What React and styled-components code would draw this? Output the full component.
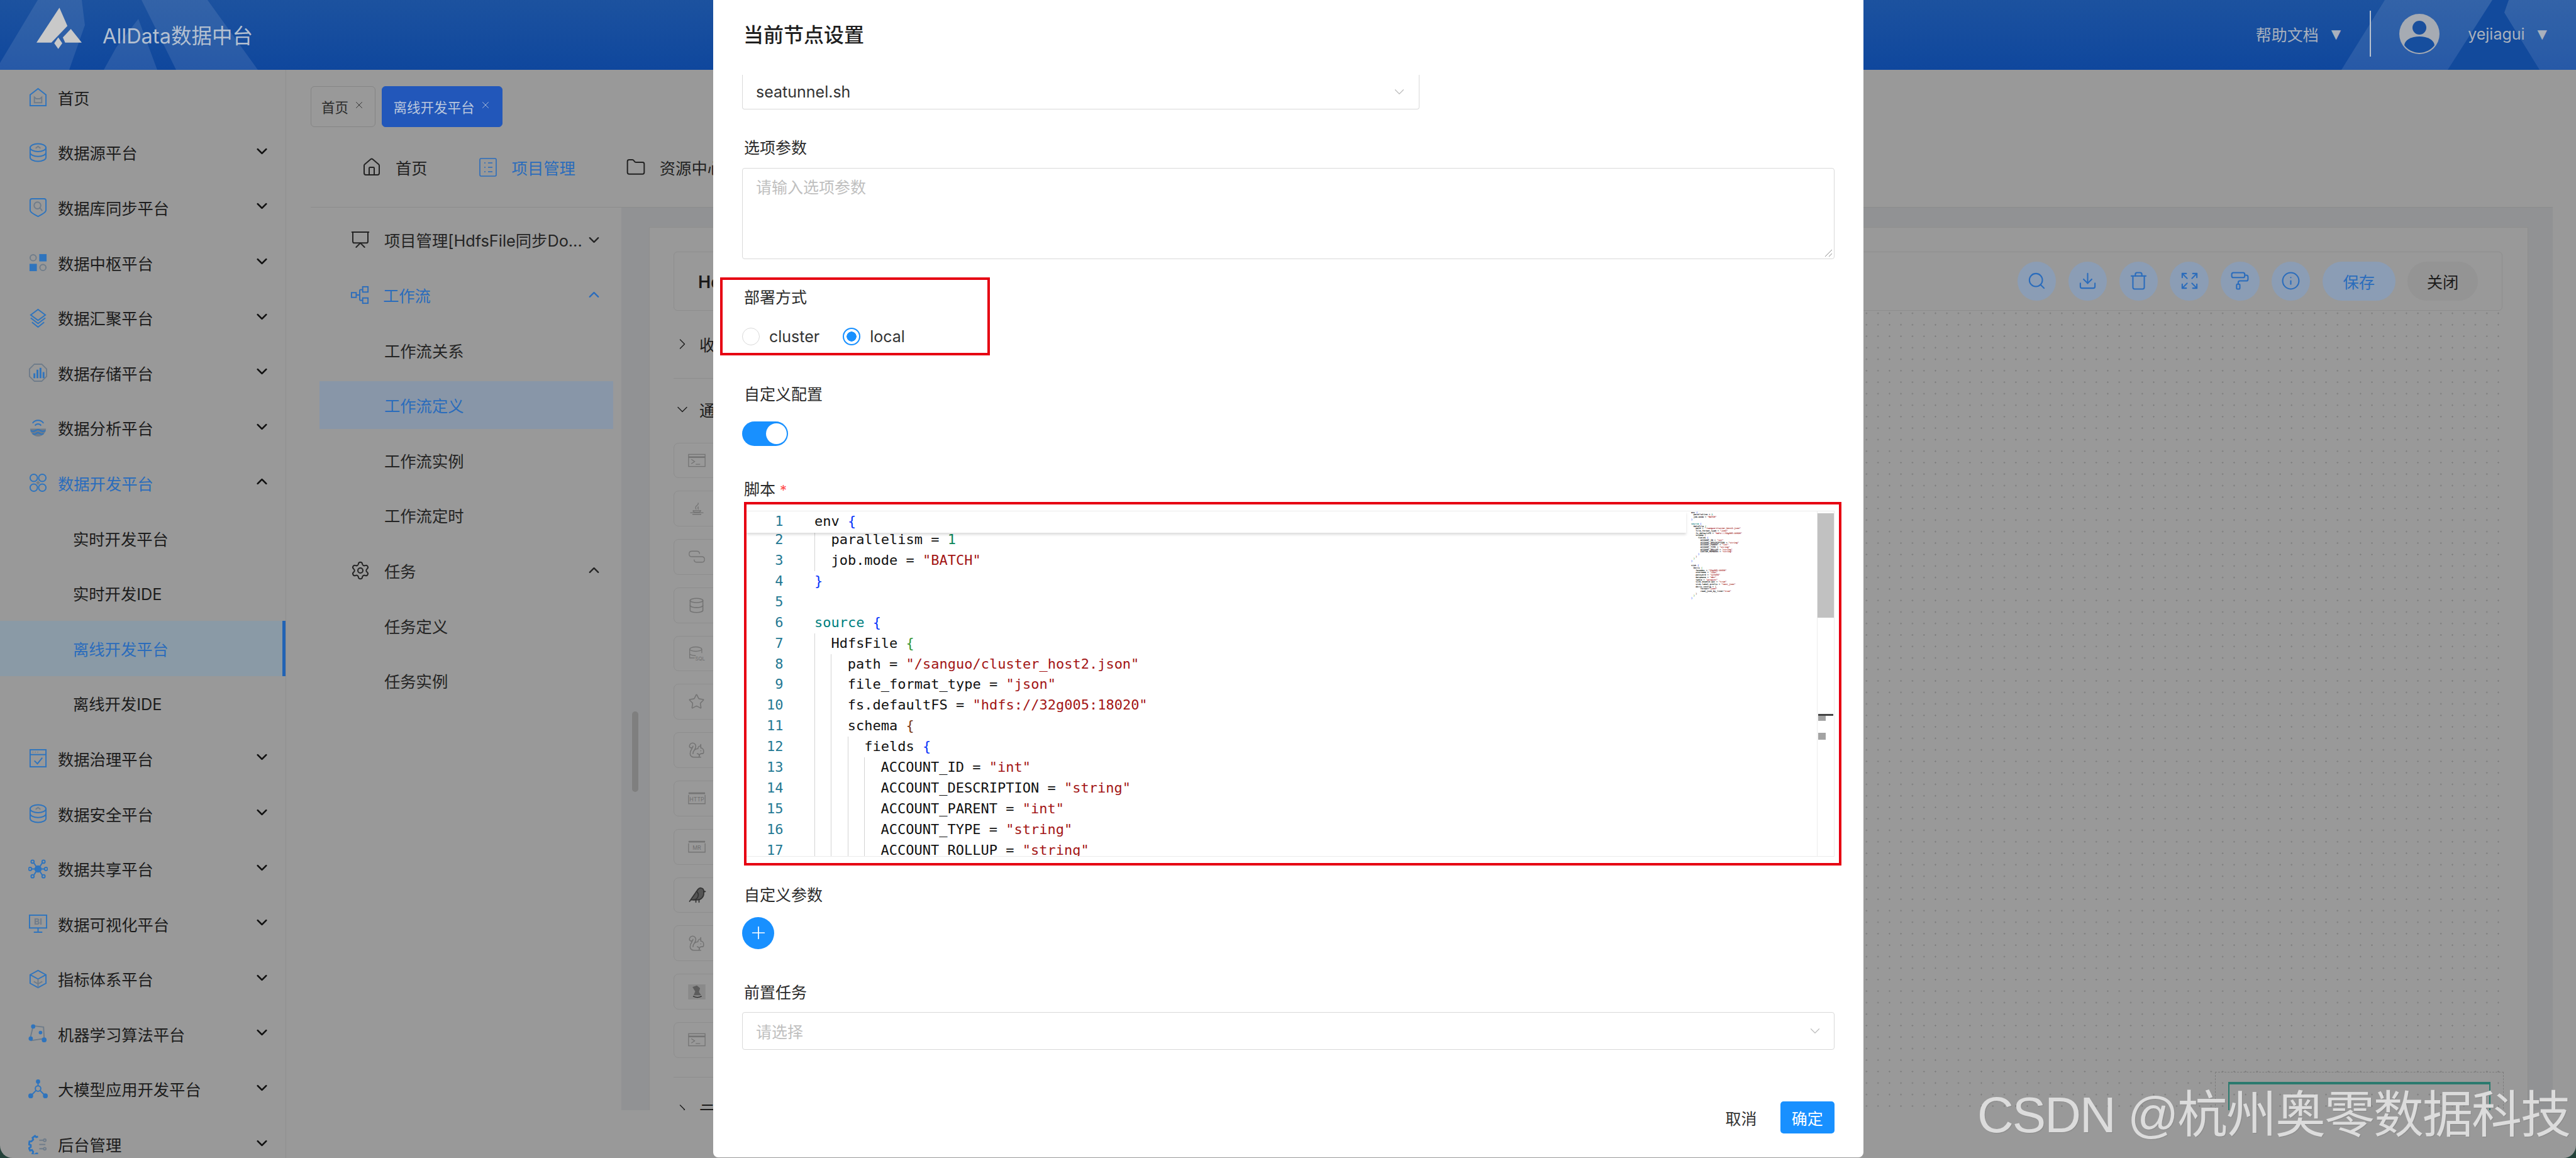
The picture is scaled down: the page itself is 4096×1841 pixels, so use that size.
import React from "react";
import styled, { createGlobalStyle } from "styled-components";
import {
  Bird,
  ChevronDown,
  ChevronRight,
  ChevronUp,
  Database,
  Download,
  Expand,
  Folder,
  House,
  Info,
  PaintRoller,
  Plus,
  Presentation,
  Search,
  Settings,
  Squirrel,
  Star,
  Trash,
  X,
} from "lucide-react";

const BLUE = "#2a6cbc";
const ACCENT = "#6f7c8a";
const UI_FONT = '"Inter", "Noto Sans CJK SC", sans-serif';

const GlobalStyle = createGlobalStyle`
  html, body {
    margin: 0;
    background: #24423a;
    overflow: hidden;
  }
  * {
    box-sizing: border-box;
  }
`;

const SCRIPT = `env {
  parallelism = 1
  job.mode = "BATCH"
}

source {
  HdfsFile {
    path = "/sanguo/cluster_host2.json"
    file_format_type = "json"
    fs.defaultFS = "hdfs://32g005:18020"
    schema {
      fields {
        ACCOUNT_ID = "int"
        ACCOUNT_DESCRIPTION = "string"
        ACCOUNT_PARENT = "int"
        ACCOUNT_TYPE = "string"
        ACCOUNT_ROLLUP = "string"
        CUSTOM_MEMBERS = "string"
      }
    }
  }
}

sink {
  Doris {
    fenodes = "32g005:18030"
    username = "root"
    password = "123456"
    database = "dbt"
    table = "account"
    sink.enable-2pc = "true"
    sink.label-prefix = "test_json"
    doris.config = {
        format="json"
        read_json_by_line="true"
    }
  }
}`.split("\n");

const BRACKET_COLORS = ["#0431fa", "#319331", "#7b3814"];

function tokenColor(token, depth) {
  if (token.startsWith('"')) return "#a31515";
  if (token === "{" || token === "}") return BRACKET_COLORS[depth % 3];
  if (token === "1") return "#098658";
  if (token === "source") return "#008080";
  return "#111";
}

function CodeText({ text }) {
  const depth = Math.floor((text.length - text.trimStart().length) / 2);
  const parts = text.trim().split(/("[^"]*"|[{}]|\b1\b|^source)/).filter(Boolean);
  return parts.map((part, i) => (
    <span key={i} style={{ color: tokenColor(part, depth) }}>
      {part}
    </span>
  ));
}

function CodeLine({ number, text }) {
  const depth = Math.floor((text.length - text.trimStart().length) / 2);
  return (
    <LineRow>
      <LineNumber>{number}</LineNumber>
      <LineCode>
        {Array.from({ length: depth }, (v, i) => (
          <IndentGuide key={i} />
        ))}
        <CodeText text={text} />
      </LineCode>
    </LineRow>
  );
}

const sideGlyphs = {
  home: (
    <>
      <path d="M16 2 29 12V30H3V12Z" />
      <path d="M10 16l3 2.5h6l3-2.5V25H10Z" stroke={ACCENT} />
    </>
  ),
  disks: (
    <>
      <ellipse cx="16" cy="8" rx="13" ry="6.5" />
      <path d="M3 8v8c0 3.6 5.8 6.5 13 6.5s13-2.9 13-6.5V8" />
      <path d="M3 16v8c0 3.6 5.8 6.5 13 6.5s13-2.9 13-6.5v-8" />
      <path d="M12 9l4-3 4 3" stroke={ACCENT} />
    </>
  ),
  shield: (
    <>
      <path d="M6 2H26Q29 2 29 5V21Q29 25 16 31 3 25 3 21V5Q3 2 6 2Z" />
      <circle cx="15" cy="13" r="5.5" stroke={ACCENT} />
      <path d="M19 17l4 5" stroke={ACCENT} />
    </>
  ),
  hub: (
    <>
      <circle cx="8" cy="8" r="5" stroke={ACCENT} />
      <rect x="18" y="2" width="12" height="12" fill="#2f74bd" stroke="none" />
      <rect x="2" y="18" width="12" height="12" fill="#2f74bd" stroke="none" />
      <circle cx="24" cy="24" r="5" stroke={ACCENT} />
    </>
  ),
  layers: (
    <>
      <path d="M16 2 28 11 16 20 4 11Z" />
      <path d="M4 16l12 9 12-9" />
      <path d="M6 23l10 8 10-8" />
    </>
  ),
  storage: (
    <>
      <path d="M10 2H22L30 10V22L22 30H10L2 22V10Z" stroke={ACCENT} />
      <path d="M10 25V17M15 25V11M20 25V8M25 25V15" strokeWidth="3" />
    </>
  ),
  waves: (
    <>
      <path d="M7 8a11 11 0 0 1 18 0" />
      <path d="M11 12a6 6 0 0 1 10 0" />
      <path d="M3 17H29A13 13 0 0 1 3 17Z" fill={ACCENT} stroke="none" />
      <path d="M4 20q4 3 8 0t8 0 8 0M7 25q3 2.5 6 0t6 0 6 0" />
    </>
  ),
  clover: (
    <>
      <circle cx="9" cy="8" r="6" />
      <circle cx="23" cy="8" r="6" />
      <circle cx="9" cy="24" r="6" />
      <circle cx="23" cy="24" r="6" />
      <path d="M16 13v6M13 16h6" stroke={ACCENT} />
    </>
  ),
  govern: (
    <>
      <rect x="3" y="2" width="26" height="28" />
      <path d="M3 10H29" />
      <path d="M7 6h1M11 6h1M15 6h1" stroke={ACCENT} />
      <path d="M10 20l5 5 8-10" />
    </>
  ),
  share: (
    <>
      <circle cx="16" cy="16" r="5" fill="#2f74bd" />
      <circle cx="7" cy="4" r="2.5" />
      <circle cx="25" cy="4" r="2.5" />
      <circle cx="3" cy="16" r="2.5" />
      <circle cx="29" cy="16" r="2.5" />
      <circle cx="7" cy="28" r="2.5" />
      <circle cx="25" cy="28" r="2.5" />
      <path d="M9 6l4 6M23 6l-4 6M6 16h5M21 16h5M9 26l4-6M23 26l-4-6" />
    </>
  ),
  screen: (
    <>
      <rect x="2" y="2" width="28" height="21" />
      <path d="M16 23v7M9 30H23" />
      <text x="16" y="18" fontSize="14" fontWeight="700" textAnchor="middle" fill={ACCENT} stroke="none">
        BI
      </text>
    </>
  ),
  cube: (
    <>
      <path d="M16 2 29 9V23L16 30 3 23V9Z" />
      <path d="M3 9l13 7 13-7" />
      <path d="M16 16V30M9 20l7 4 7-4" stroke={ACCENT} />
    </>
  ),
  model: (
    <>
      <path d="M8 3 25 5 26 24 5 27 3 24Z" stroke={ACCENT} />
      <circle cx="8" cy="4" r="2.5" fill="#2f74bd" />
      <circle cx="26" cy="26" r="3" fill="#2f74bd" />
      <circle cx="4" cy="24" r="2.5" fill="#2f74bd" />
      <circle cx="20" cy="14" r="2" fill="#2f74bd" />
    </>
  ),
  graph: (
    <>
      <circle cx="16" cy="15" r="4.5" />
      <circle cx="16" cy="3.5" r="2.5" fill="#2f74bd" />
      <circle cx="4" cy="27" r="3" fill="#2f74bd" />
      <circle cx="28" cy="27" r="3" fill="#2f74bd" />
      <path d="M16 6v5M6 25l7-7M26 25l-7-7" />
    </>
  ),
  gear: (
    <>
      <path
        d="M16 3l-3 1-2-2-4 3 1 3-3 3-3 0-1 5 3 1v3l-3 2 2 4 3-1 2 3-1 3 4 2 2-2h3"
        strokeWidth="3"
      />
      <path d="M18 9h7M18 16h10M18 23h7" stroke={ACCENT} />
      <circle cx="27" cy="9" r="2" stroke={ACCENT} />
      <circle cx="27" cy="23" r="2" stroke={ACCENT} />
    </>
  ),
};

const SIDE_ITEMS = [
  { label: "首页", glyph: "home" },
  { label: "数据源平台", glyph: "disks", arrow: "down" },
  { label: "数据库同步平台", glyph: "shield", arrow: "down" },
  { label: "数据中枢平台", glyph: "hub", arrow: "down" },
  { label: "数据汇聚平台", glyph: "layers", arrow: "down" },
  { label: "数据存储平台", glyph: "storage", arrow: "down" },
  { label: "数据分析平台", glyph: "waves", arrow: "down" },
  { label: "数据开发平台", glyph: "clover", arrow: "up", open: true },
  { label: "实时开发平台", sub: true },
  { label: "实时开发IDE", sub: true },
  { label: "离线开发平台", sub: true, selected: true },
  { label: "离线开发IDE", sub: true },
  { label: "数据治理平台", glyph: "govern", arrow: "down" },
  { label: "数据安全平台", glyph: "disks", arrow: "down" },
  { label: "数据共享平台", glyph: "share", arrow: "down" },
  { label: "数据可视化平台", glyph: "screen", arrow: "down" },
  { label: "指标体系平台", glyph: "cube", arrow: "down" },
  { label: "机器学习算法平台", glyph: "model", arrow: "down" },
  { label: "大模型应用开发平台", glyph: "graph", arrow: "down" },
  { label: "后台管理", glyph: "gear", arrow: "down" },
];

const ShellGlyph = () => (
  <ListSvg viewBox="0 0 32 24">
    <rect x="1" y="1" width="30" height="22" />
    <path d="M1 6H31" strokeWidth="3" />
    <path d="M6 10l6 4-6 4M14 19h8" />
  </ListSvg>
);

const LabelGlyph = ({ text }) => (
  <ListSvg viewBox="0 0 32 24">
    <path d="M1 6V22H31V6" />
    <path d="M1 3H31" strokeWidth="3" />
    <text x="16" y="18" fontSize="10" textAnchor="middle" fill="#6f6f6f" stroke="none">
      {text}
    </text>
  </ListSvg>
);

const SqlGlyph = () => (
  <ListSvg viewBox="0 0 32 26">
    <ellipse cx="14" cy="5" rx="11" ry="4" />
    <path d="M3 5V21H12M25 5V12M3 13c0 2 5 4 11 4" />
    <text x="22" y="25" fontSize="9" textAnchor="middle" fill="#6f6f6f" stroke="none">
      SQL
    </text>
  </ListSvg>
);

const HiveGlyph = () => (
  <ListSvg viewBox="0 0 32 28">
    <rect x="0" y="0" width="32" height="28" fill="#8a8a8a" stroke="none" />
    <path d="M8 5l8-3 6 5-2 7 4 6H10l3-7Z" fill="#5c5c5c" stroke="none" />
    <path d="M9 22q8 4 16 0" stroke="#2a2a2a" />
  </ListSvg>
);

const JavaGlyph = () => (
  <ListSvg viewBox="0 0 32 24">
    <path d="M4 19h24M8 22h16M9 15h14q0 3-7 3t-7-3M15 13q-3-4 1-7t2-5M19 13q-2-3 0-5" />
  </ListSvg>
);

const PythonGlyph = () => (
  <ListSvg viewBox="0 0 32 24">
    <path d="M16 12H7q-5 0-5-5t5-5h9q5 0 5 5M16 12h9q5 0 5 5t-5 5h-9q-5 0-5-5" />
  </ListSvg>
);

const listIcons = () => [
  <ShellGlyph key="shell" />,
  <JavaGlyph key="java" />,
  <PythonGlyph key="python" />,
  <Database key="db" size={27} strokeWidth={1.4} color="#747474" />,
  <SqlGlyph key="sql" />,
  <Star key="star" size={27} strokeWidth={1.4} color="#747474" />,
  <Squirrel key="squirrel" size={27} strokeWidth={1.4} color="#747474" />,
  <LabelGlyph key="http" text="HTTP" />,
  <LabelGlyph key="mr" text="MR" />,
  <Bird key="bird" size={30} strokeWidth={1.4} color="#333" fill="#555" />,
  <Squirrel key="squirrel2" size={27} strokeWidth={1.4} color="#747474" />,
  <HiveGlyph key="hive" />,
  <ShellGlyph key="shell2" />,
];

const TOOL_ICONS = [Search, Download, Trash, Expand, PaintRoller, Info];

const MENU_ROWS = [
  { label: "工作流关系" },
  { label: "工作流定义", selected: true },
  { label: "工作流实例" },
  { label: "工作流定时" },
];

export default function App() {
  return (
    <Page>
      <GlobalStyle />
      <Header>
        <HeaderDecor viewBox="0 0 4096 111" preserveAspectRatio="none">
          <path d="M0 100 60 0H130L135 40 110 111H0ZM225 0H330L410 111H280ZM165 111 185 75 220 30 250 111Z" fill="#ffffff" opacity="0.1" />
          <path d="M3723 111 3792 0H4096V111Z" fill="#ffffff" opacity="0.1" />
          <path d="M3892 111 3963 0H3989L3982 20 4038 111Z" fill="#124a9c" />
        </HeaderDecor>
        <Logo viewBox="0 0 79 72">
          <path d="M40 0 54 32 26 61H0Z" fill="#c9c9c9" />
          <path d="M60 37 79 61H50L46 52Z" fill="#c9c9c9" />
          <path d="M38 52 45 62 38 72 31 62Z" fill="#c9c9c9" />
        </Logo>
        <BrandName>AllData数据中台</BrandName>
        <HeaderRight>
          <HeaderText>帮助文档</HeaderText>
          <Caret>▼</Caret>
          <HeaderDivider />
          <Avatar viewBox="0 0 64 64">
            <circle cx="32" cy="32" r="32" fill="#a6abb3" />
            <circle cx="32" cy="22" r="11" fill="#1a4f9c" />
            <path d="M8 50a24 14 0 0 1 48 0 30 30 0 0 1-48 0Z" fill="#164e9e" />
          </Avatar>
          <HeaderText $name>yejiagui</HeaderText>
          <Caret>▼</Caret>
        </HeaderRight>
      </Header>

      <Body>
        <Sidebar>
          {SIDE_ITEMS.map((item) => (
            <SideRow key={item.label} $sub={item.sub} $selected={item.selected} $open={item.open}>
              {item.glyph && <SideIcon viewBox="0 0 32 32">{sideGlyphs[item.glyph]}</SideIcon>}
              <SideLabel>{item.label}</SideLabel>
              {item.arrow === "down" && <ChevronDown size={27} strokeWidth={2.4} />}
              {item.arrow === "up" && <ChevronUp size={27} strokeWidth={2.4} />}
            </SideRow>
          ))}
        </Sidebar>

        <Main>
          <TabBar>
            <Tab $width={103}>
              首页
              <X size={18} strokeWidth={1.2} />
            </Tab>
            <Tab $width={192} $active>
              离线开发平台
              <X size={18} strokeWidth={1.2} />
            </Tab>
          </TabBar>
          <TopNav>
            <NavItem>
              <House size={32} strokeWidth={1.5} />
              首页
            </NavItem>
            <NavItem $active>
              <ListBoard viewBox="0 0 32 32">
                <rect x="3" y="2" width="26" height="28" rx="2" />
                <path d="M10 9h2M10 16h2M10 23h2M16 9h7M16 16h7M16 23h7" />
              </ListBoard>
              项目管理
            </NavItem>
            <NavItem>
              <Folder size={32} strokeWidth={1.5} />
              资源中心
            </NavItem>
          </TopNav>

          <Workspace>
            <MenuPanel>
              <MenuRow>
                <Presentation size={32} strokeWidth={1.5} />
                <MenuLabel>项目管理[HdfsFile同步Do...</MenuLabel>
                <ChevronDown size={27} strokeWidth={2} />
              </MenuRow>
              <MenuRow $active>
                <FlowIcon viewBox="0 0 32 32">
                  <rect x="2" y="12" width="8" height="8" />
                  <rect x="21" y="2" width="9" height="9" />
                  <rect x="21" y="21" width="9" height="9" />
                  <path d="M10 16h6M16 7V25M16 7h5M16 25h5" />
                </FlowIcon>
                <MenuLabel>工作流</MenuLabel>
                <ChevronUp size={27} strokeWidth={2} />
              </MenuRow>
              {MENU_ROWS.map((row) => (
                <MenuRow key={row.label} $sub $selected={row.selected}>
                  <MenuLabel>{row.label}</MenuLabel>
                </MenuRow>
              ))}
              <MenuRow>
                <Settings size={32} strokeWidth={1.5} />
                <MenuLabel>任务</MenuLabel>
                <ChevronUp size={27} strokeWidth={2} />
              </MenuRow>
              <MenuRow $sub>
                <MenuLabel>任务定义</MenuLabel>
              </MenuRow>
              <MenuRow $sub>
                <MenuLabel>任务实例</MenuLabel>
              </MenuRow>
            </MenuPanel>

            <Gutter>
              <GutterThumb />
            </Gutter>

            <Card>
              <Toolbar>
                <FlowName>HdfsFile同步Doris</FlowName>
                <ToolButtons>
                  {TOOL_ICONS.map((Icon, i) => (
                    <RoundButton key={i}>
                      <Icon size={31} strokeWidth={1.6} />
                    </RoundButton>
                  ))}
                  <PillButton>保存</PillButton>
                  <PillButton $neutral>关闭</PillButton>
                </ToolButtons>
              </Toolbar>
              <CanvasRow>
                <ComponentPanel>
                  <CollapseHead $line>
                    <ChevronRight size={28} strokeWidth={1.2} />
                    收藏组件
                  </CollapseHead>
                  <CollapseHead $open>
                    <ChevronDown size={28} strokeWidth={1.2} />
                    通用组件
                  </CollapseHead>
                  <ComponentList>
                    {listIcons().map((icon) => (
                      <ComponentCard key={icon.key}>{icon}</ComponentCard>
                    ))}
                  </ComponentList>
                  <CollapseHead $last>
                    <ChevronRight size={28} strokeWidth={1.2} />
                    云
                  </CollapseHead>
                </ComponentPanel>
                <Canvas>
                  <DashedFrame />
                  <FlowNode />
                </Canvas>
              </CanvasRow>
            </Card>
          </Workspace>
        </Main>
      </Body>

      <Watermark>CSDN @杭州奥零数据科技</Watermark>

      <Modal>
        <ModalTitle>当前节点设置</ModalTitle>
        <ClippedSelect>
          seatunnel.sh
          <ChevronDown size={26} strokeWidth={1.1} color="#bdbdbd" />
        </ClippedSelect>

        <FieldLabel $top={46}>选项参数</FieldLabel>
        <TextArea>
          请输入选项参数
          <ResizeGrip viewBox="0 0 14 14">
            <path d="M2 13 13 2M8 13l5-5" />
          </ResizeGrip>
        </TextArea>

        <RedBox>
          <FieldLabel>部署方式</FieldLabel>
          <RadioGroup>
            <RadioItem>
              <RadioDot />
              cluster
            </RadioItem>
            <RadioItem>
              <RadioDot $checked />
              local
            </RadioItem>
          </RadioGroup>
        </RedBox>

        <FieldLabel $top={47}>自定义配置</FieldLabel>
        <Switch />

        <FieldLabel $top={54}>
          脚本 <Required>*</Required>
        </FieldLabel>
        <CodeBox>
          <Editor>
            <StickyLine>
              <CodeLine number={1} text={SCRIPT[0]} />
            </StickyLine>
            <CodeLines>
              {SCRIPT.slice(1, 17).map((text, i) => (
                <CodeLine key={i} number={i + 2} text={text} />
              ))}
            </CodeLines>
            <Minimap aria-hidden="true">
              {SCRIPT.map((text, i) => (
                <MiniLine key={i} style={{ paddingLeft: `${(text.length - text.trimStart().length) * 1.83}px` }}>
                  <CodeText text={text} />
                </MiniLine>
              ))}
            </Minimap>
            <OverviewRuler>
              <RulerThumb />
              <RulerMark $dark />
              <RulerBlock />
              <RulerBlock $low />
            </OverviewRuler>
          </Editor>
        </CodeBox>

        <FieldLabel $top={32}>自定义参数</FieldLabel>
        <AddButton>
          <Plus size={32} strokeWidth={1.3} />
        </AddButton>

        <FieldLabel $top={54}>前置任务</FieldLabel>
        <SelectBox>
          请选择
          <ChevronDown size={26} strokeWidth={1.1} color="#bdbdbd" />
        </SelectBox>

        <ModalFooter>
          <CancelText>取消</CancelText>
          <ConfirmButton>确定</ConfirmButton>
        </ModalFooter>
      </Modal>
    </Page>
  );
}

const Page = styled.div`
  position: relative;
  width: 4096px;
  height: 1841px;
  overflow: hidden;
  display: flex;
  flex-direction: column;
  background: #999;
  border-radius: 0 0 20px 20px;
  font-family: ${UI_FONT};
  color: #1c1c1c;
`;

const Header = styled.header`
  position: relative;
  flex: none;
  height: 111px;
  display: flex;
  align-items: center;
  padding: 0 46px 0 58px;
  overflow: hidden;
  background: linear-gradient(180deg, #1c529f 0%, #0f479d 100%);
`;

const HeaderDecor = styled.svg`
  position: absolute;
  inset: 0;
  width: 100%;
  height: 100%;
`;

const Logo = styled.svg`
  position: relative;
  flex: none;
  width: 72px;
  height: 66px;
  margin-top: -22px;
`;

const BrandName = styled.div`
  position: relative;
  margin-left: 33px;
  margin-top: -2px;
  font-size: 32.5px;
  color: #b4c0d0;
`;

const HeaderRight = styled.div`
  position: relative;
  margin-left: auto;
  display: flex;
  align-items: center;
  margin-top: -4px;
`;

const HeaderText = styled.span`
  font-size: 25px;
  color: #a9b1bd;
  margin-left: ${(props) => (props.$name ? "45px" : "0")};
`;

const Caret = styled.span`
  font-family: "DejaVu Sans", sans-serif;
  font-size: 20px;
  color: #a9b1bd;
  margin-left: 20px;
`;

const HeaderDivider = styled.div`
  width: 2px;
  height: 73px;
  margin: 0 45px 0 46px;
  background: #b9c2ce;
`;

const Avatar = styled.svg`
  flex: none;
  width: 64px;
  height: 64px;
`;

const Body = styled.div`
  flex: 1;
  display: flex;
  min-height: 0;
`;

const Sidebar = styled.nav`
  flex: none;
  width: 455px;
  overflow: hidden;
  border-right: 1px solid #8f8f8f;
`;

const SideRow = styled.div`
  height: 87.6px;
  display: flex;
  align-items: center;
  gap: 16px;
  padding: 0 24px 0 ${(props) => (props.$sub ? "116px" : "45px")};
  color: ${(props) => (props.$selected || props.$open ? BLUE : "#1c1c1c")};
  background: ${(props) => (props.$selected ? "#8a9aa6" : "transparent")};
  border-right: ${(props) => (props.$selected ? "5px solid #2263b4" : "0")};

  > svg:last-child:not(:first-child) {
    color: #111;
    margin-top: -4px;
  }
`;

const SideIcon = styled.svg`
  flex: none;
  width: 31px;
  height: 31px;
  fill: none;
  stroke: #2f74bd;
  stroke-width: 2;
`;

const SideLabel = styled.span`
  flex: 1;
  font-size: 25.3px;
  white-space: nowrap;
`;

const Main = styled.main`
  flex: 1;
  min-width: 0;
  margin: 0 37px 76px 39px;
  display: flex;
  flex-direction: column;
`;

const TabBar = styled.div`
  flex: none;
  display: flex;
  gap: 10px;
  padding-top: 26px;
`;

const Tab = styled.div`
  width: ${(props) => props.$width}px;
  height: 65px;
  display: flex;
  align-items: center;
  justify-content: center;
  gap: 8px;
  border: 1px solid ${(props) => (props.$active ? "#2257ba" : "#858585")};
  border-radius: 6px;
  font-size: 21.5px;
  color: ${(props) => (props.$active ? "#b9c6dd" : "#2a2a2a")};
  background: ${(props) => (props.$active ? "#2257ba" : "#999")};

  svg {
    flex: none;
    margin-top: -6px;
  }
`;

const TopNav = styled.div`
  flex: none;
  height: 128px;
  display: flex;
  align-items: center;
  gap: 80px;
  padding-left: 81px;
  border-bottom: 1px solid #8c8c8c;
`;

const NavItem = styled.div`
  display: flex;
  align-items: center;
  gap: 22px;
  font-size: 25.3px;
  color: ${(props) => (props.$active ? BLUE : "#222")};

  svg {
    flex: none;
  }
`;

const ListBoard = styled.svg`
  width: 32px;
  height: 32px;
  fill: none;
  stroke: ${BLUE};
  stroke-width: 1.6;
`;

const Workspace = styled.div`
  flex: 1;
  min-height: 0;
  display: flex;
  background: #919294;
`;

const MenuPanel = styled.div`
  flex: none;
  width: 494px;
  padding-top: 7.6px;
  background: #999;
`;

const MenuRow = styled.div`
  position: relative;
  height: 87.6px;
  display: flex;
  align-items: center;
  gap: 22px;
  padding: ${(props) => (props.$sub ? "0 30px 0 117px" : "0 30px 0 63px")};
  color: ${(props) => (props.$active || props.$selected ? BLUE : "#242424")};
  background: ${(props) =>
    props.$selected ? "linear-gradient(#999 0 6px, #8896a8 6px 81.6px, #999 81.6px)" : "transparent"};
  background-size: 467px 100%;
  background-position: 14px 0;
  background-repeat: no-repeat;

  svg {
    flex: none;
  }
`;

const FlowIcon = styled.svg`
  flex: none;
  width: 30px;
  height: 30px;
  fill: none;
  stroke: ${BLUE};
  stroke-width: 2;
`;

const MenuLabel = styled.span`
  flex: 1;
  min-width: 0;
  margin-right: -16px;
  font-size: 25.3px;
  white-space: nowrap;
`;

const Gutter = styled.div`
  position: relative;
  flex: none;
  width: 44px;
`;

const GutterThumb = styled.div`
  position: absolute;
  top: 801px;
  left: 17px;
  width: 10px;
  height: 128px;
  border-radius: 5px;
  background: #7f7f7f;
`;

const Card = styled.section`
  flex: 1;
  min-width: 0;
  margin: 31px 39px 0 0;
  padding: 38px 40px 0 38px;
  display: flex;
  flex-direction: column;
  overflow: hidden;
  background: #999;
  border: 1px solid #8e8e8e;
  border-bottom: 0;
`;

const Toolbar = styled.div`
  flex: none;
  height: 93.5px;
  display: flex;
  align-items: center;
  justify-content: space-between;
  padding: 0 38px;
  border: 1px solid #8e8e8e;
  border-radius: 6px;
`;

const FlowName = styled.div`
  font-size: 27px;
  font-weight: 600;
  color: #1a1a1a;
`;

const ToolButtons = styled.div`
  display: flex;
  align-items: center;
  gap: 19.3px;
`;

const RoundButton = styled.div`
  width: 61.5px;
  height: 62px;
  display: flex;
  align-items: center;
  justify-content: center;
  border-radius: 50%;
  color: ${BLUE};
  background: #8b9db5;
`;

const PillButton = styled.div`
  width: ${(props) => (props.$neutral ? "112px" : "116px")};
  height: 62px;
  display: flex;
  align-items: center;
  justify-content: center;
  border-radius: 31px;
  font-size: 25.3px;
  color: ${(props) => (props.$neutral ? "#1c1c1c" : BLUE)};
  background: ${(props) => (props.$neutral ? "#949494" : "#8b9db5")};
`;

const CanvasRow = styled.div`
  flex: 1;
  min-height: 0;
  display: flex;
`;

const ComponentPanel = styled.aside`
  flex: none;
  width: 320px;
`;

const CollapseHead = styled.div`
  display: flex;
  align-items: center;
  gap: 13px;
  height: ${(props) => (props.$open ? "98px" : props.$last ? "auto" : "108px")};
  margin-top: ${(props) => (props.$last ? "33px" : "0")};
  font-size: 25.3px;
  border-bottom: ${(props) => (props.$line ? "1px solid #8e8e8e" : "0")};
`;

const ComponentList = styled.div`
  display: flex;
  flex-direction: column;
  gap: 20px;
  padding: 4px 0 30px;
  border-bottom: 1px solid #8e8e8e;
`;

const ComponentCard = styled.div`
  height: 56.8px;
  display: flex;
  align-items: center;
  padding-left: 22px;
  border: 1px solid #8e8e8e;
  border-radius: 8px;
`;

const ListSvg = styled.svg`
  width: 28px;
  height: 24px;
  fill: none;
  stroke: #747474;
  stroke-width: 1.5;
`;

const Canvas = styled.div`
  position: relative;
  flex: 1;
  min-width: 0;
  background-image: radial-gradient(circle, #7d7d7d 1px, transparent 1.3px);
  background-size: 18.28px 18.28px;
  background-position: -3.1px -5.1px;
`;

const DashedFrame = styled.div`
  position: absolute;
  left: 2131px;
  top: 1210px;
  width: 459px;
  height: 100px;
  border: 1px dashed #7c7c7c;
`;

const FlowNode = styled.div`
  position: absolute;
  left: 2152px;
  top: 1226px;
  width: 417px;
  height: 100px;
  border: 2px solid #2a7a6e;
  border-top-width: 4px;
`;

const Watermark = styled.div`
  position: absolute;
  left: 3144px;
  top: 1733px;
  font-family: "Liberation Sans", "Noto Sans CJK SC", sans-serif;
  font-size: 80px;
  line-height: 80px;
  letter-spacing: -2px;
  white-space: nowrap;
  color: #dcdcdc;
  text-shadow: 1px 1px 1px #8a8a8a;
`;

const Modal = styled.div`
  position: absolute;
  top: 0;
  left: 1134px;
  width: 1829px;
  height: 1840px;
  display: flex;
  flex-direction: column;
  align-items: flex-start;
  padding: 0 46px;
  background: #fff;
  border-radius: 0 0 8px 8px;
  font-size: 25px;
  color: #262626;
`;

const ModalTitle = styled.div`
  flex: none;
  height: 119px;
  padding: 34px 0 0 2px;
  font-size: 32px;
  line-height: 44px;
  font-weight: 500;
  color: #1f1f1f;
`;

const ClippedSelect = styled.div`
  flex: none;
  width: 1077px;
  height: 55px;
  display: flex;
  align-items: center;
  justify-content: space-between;
  padding: 0 18px 0 21px;
  border: 1px solid #d9d9d9;
  border-top: 0;
  border-radius: 0 0 4px 4px;
  color: #333;
`;

const FieldLabel = styled.div`
  flex: none;
  height: 30px;
  line-height: 30px;
  padding-left: 3px;
  margin-top: ${(props) => props.$top || 0}px;
  color: #2a2a2a;
`;

const Required = styled.span`
  color: #ff4d4f;
  font-size: 22px;
`;

const TextArea = styled.div`
  position: relative;
  flex: none;
  width: 100%;
  height: 145px;
  margin-top: 17px;
  padding: 15px 21px;
  line-height: 30px;
  border: 1px solid #d9d9d9;
  border-radius: 4px;
  color: #bfbfbf;
`;

const ResizeGrip = styled.svg`
  position: absolute;
  right: 2px;
  bottom: 2px;
  width: 14px;
  height: 14px;
  fill: none;
  stroke: #8c8c8c;
  stroke-width: 1;
`;

const RedBox = styled.div`
  flex: none;
  width: 428.5px;
  height: 124px;
  margin: 28.6px 0 0 -35px;
  padding: 13px 0 0 31px;
  border: 4.5px solid #e60012;
`;

const RadioGroup = styled.div`
  display: flex;
  gap: 37px;
  margin-top: 33px;
`;

const RadioItem = styled.div`
  display: flex;
  align-items: center;
  gap: 15px;
  height: 28px;
  color: #333;
`;

const RadioDot = styled.span`
  flex: none;
  width: 28px;
  height: 28px;
  border-radius: 50%;
  border: ${(props) => (props.$checked ? "2px solid #1890ff" : "1px solid #d9d9d9")};
  background: ${(props) =>
    props.$checked ? "radial-gradient(circle, #1890ff 0 7.5px, #fff 8px)" : "#fff"};
`;

const Switch = styled.div`
  flex: none;
  position: relative;
  width: 73px;
  height: 39px;
  margin-top: 28px;
  border-radius: 20px;
  background: #1890ff;

  &::after {
    content: "";
    position: absolute;
    right: 2px;
    top: 3px;
    width: 33px;
    height: 33px;
    border-radius: 50%;
    background: #fff;
  }
`;

const CodeBox = styled.div`
  flex: none;
  width: 1745px;
  height: 578px;
  margin: 5px 0 0 3px;
  padding: 10px 7.5px 9.5px 0;
  border: 4.5px solid #e60012;
`;

const Editor = styled.div`
  position: relative;
  height: 100%;
  overflow: hidden;
  border-top: 1px solid #ececec;
  border-bottom: 1px solid #ececec;
  border-right: 1px solid #ececec;
  font-family: "DejaVu Sans Mono", monospace;
  font-size: 22px;
  line-height: 32.9px;
`;

const StickyLine = styled.div`
  position: relative;
  z-index: 1;
  width: 1494px;
  height: 34.5px;
  background: #fff;
  box-shadow: 0 3px 4px rgba(0, 0, 0, 0.14);
`;

const CodeLines = styled.div`
  margin-top: -4.9px;
`;

const LineRow = styled.div`
  display: flex;
  height: 32.9px;
`;

const LineNumber = styled.div`
  flex: none;
  width: 58.5px;
  text-align: right;
  color: #237893;
`;

const LineCode = styled.div`
  display: flex;
  margin-left: 49.5px;
  white-space: pre;
`;

const IndentGuide = styled.div`
  flex: none;
  width: 26.4px;
  height: 100%;
  border-left: 1px solid #d3d3d3;
`;

const Minimap = styled.div`
  position: absolute;
  top: 1px;
  left: 1502px;
  font-size: 3.4px;
  font-weight: 700;
  line-height: 3.7px;
`;

const MiniLine = styled.div`
  height: 3.7px;
  white-space: pre;
`;

const OverviewRuler = styled.div`
  position: absolute;
  top: 0;
  right: 0;
  bottom: 0;
  width: 26.5px;
  background: #fff;
  border-left: 1px solid #ececec;
`;

const RulerThumb = styled.div`
  position: absolute;
  top: 3px;
  left: 0;
  right: 0;
  height: 166.4px;
  background: #c1c1c1;
`;

const RulerMark = styled.div`
  position: absolute;
  top: 322px;
  left: 1px;
  right: 1px;
  height: 3.5px;
  background: #444;
`;

const RulerBlock = styled.div`
  position: absolute;
  top: ${(props) => (props.$low ? "352px" : "325px")};
  left: 1px;
  width: 12px;
  height: ${(props) => (props.$low ? "11px" : "8px")};
  background: #a3a3a3;
`;

const AddButton = styled.div`
  flex: none;
  width: 51px;
  height: 51px;
  margin-top: 20px;
  display: flex;
  align-items: center;
  justify-content: center;
  border-radius: 50%;
  color: #fff;
  background: #1890ff;
`;

const SelectBox = styled.div`
  flex: none;
  width: 100%;
  height: 60.7px;
  margin-top: 16px;
  display: flex;
  align-items: center;
  justify-content: space-between;
  padding: 0 17px 0 21px;
  border: 1px solid #d9d9d9;
  border-radius: 4px;
  color: #bfbfbf;
`;

const ModalFooter = styled.div`
  flex: none;
  align-self: stretch;
  display: flex;
  align-items: center;
  justify-content: flex-end;
  gap: 37px;
  margin-top: 82px;
`;

const CancelText = styled.span`
  color: #333;
`;

const ConfirmButton = styled.div`
  width: 86.5px;
  height: 51px;
  display: flex;
  align-items: center;
  justify-content: center;
  border-radius: 5px;
  color: #fff;
  background: #1890ff;
`;
